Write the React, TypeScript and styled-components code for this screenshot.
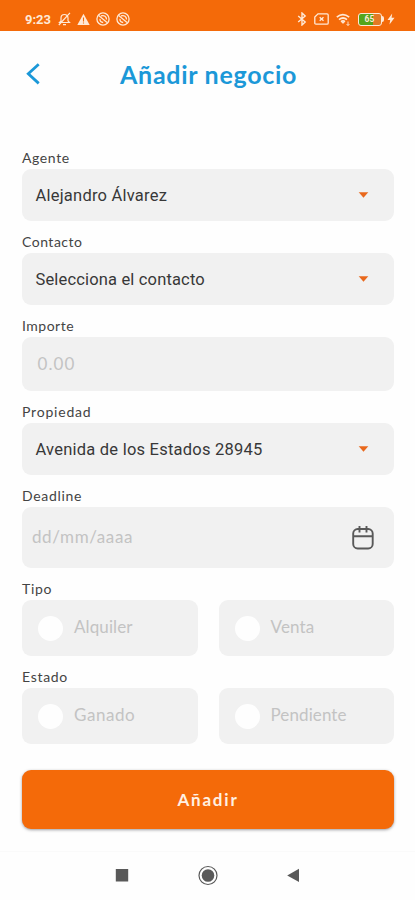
import React from "react";
import styled, { createGlobalStyle } from "styled-components";

const ORANGE = "#f46a09";
const BLUE = "#1b98d8";
const FIELD = "#f1f1f1";
const CREAM = "#ffe9d6";
const GRAPHITE = "#595959";

const GlobalStyle = createGlobalStyle`
  * { box-sizing: border-box; }
  body { margin: 0; background: #fefefe; }
  button { font: inherit; border: 0; padding: 0; background: none; }
  svg { display: block; }
`;

const Screen = styled.div`
  width: 415px;
  height: 900px;
  display: flex;
  flex-direction: column;
  overflow: hidden;
  background: #fefefe;
  font-family: Lato, sans-serif;
`;

const StatusBar = styled.div`
  height: 30.5px;
  flex: none;
  display: flex;
  align-items: center;
  justify-content: space-between;
  padding: 8px 20px 0 25px;
  background: ${ORANGE};
  color: ${CREAM};
`;

const StatusGroup = styled.div<{ $gap: number }>`
  display: flex;
  align-items: center;
  gap: ${(p) => p.$gap}px;
`;

const Clock = styled.span`
  font: 700 13px/15px Roboto, sans-serif;
  width: 27px;
  white-space: nowrap;
`;

const Header = styled.header`
  height: 106.5px;
  flex: none;
  display: grid;
  grid-template-columns: 120px 1fr;
  align-items: start;
`;

const BackButton = styled.button`
  margin: 31px 0 0 25px;
  width: 16px;
  height: 24px;
`;

const Title = styled.h1`
  margin: 26px 0 0;
  color: ${BLUE};
  font-size: 25px;
  line-height: 34px;
  font-weight: 700;
  letter-spacing: 0.72px;
  white-space: nowrap;
`;

const Form = styled.main`
  padding: 0 21px 0 22px;
  display: flex;
  flex-direction: column;
`;

const Label = styled.div<{ $space: number; $height?: number }>`
  height: ${(p) => p.$height ?? 32}px;
  padding-top: 12px;
  font-size: 14px;
  line-height: 18px;
  color: #444;
  letter-spacing: ${(p) => p.$space}px;
`;

const Field = styled.div<{ $height: number; $left?: number; $right?: number }>`
  height: ${(p) => p.$height}px;
  border-radius: 9px;
  background: ${FIELD};
  display: flex;
  align-items: center;
  justify-content: space-between;
  padding: 0 ${(p) => p.$right ?? 25}px 0 ${(p) => p.$left ?? 13.5}px;
`;

const Value = styled.span<{ $space: number }>`
  padding-top: 2px;
  font: 400 16.5px/22px Roboto, sans-serif;
  color: #383838;
  letter-spacing: ${(p) => p.$space}px;
`;

const Placeholder = styled.span<{ $space: number }>`
  font-size: 17px;
  line-height: 22px;
  color: #c3c3c3;
  letter-spacing: ${(p) => p.$space}px;
`;

const Options = styled.div`
  display: grid;
  grid-template-columns: 1fr 1fr;
  gap: 21px;
`;

const Option = styled.div`
  height: 56px;
  border-radius: 9px;
  background: ${FIELD};
  display: flex;
  align-items: center;
  padding-left: 16px;
  gap: 11px;
`;

const Radio = styled.span`
  width: 25px;
  height: 25px;
  border-radius: 50%;
  background: #fefefe;
`;

const OptionText = styled(Placeholder)`
  margin-top: -3px;
`;

const Submit = styled.button`
  && {
    margin-top: 26px;
    height: 59px;
    border-radius: 9px;
    background: ${ORANGE};
    color: #fff0e2;
    font-size: 17px;
    font-weight: 700;
    letter-spacing: 1.8px;
    box-shadow: 0 1px 3px rgba(60, 60, 70, 0.5);
  }
`;

const Navigation = styled.nav`
  margin-top: auto;
  height: 49px;
  flex: none;
  border-top: 1px solid #fafafa;
  display: flex;
  justify-content: center;
  align-items: center;
  gap: 61.5px;
`;

const MutedBell = () => (
  <svg width="13" height="14" viewBox="0 0 13 14" fill="none" stroke="currentColor" strokeWidth="1.2">
    <path d="M1.500 10.500h10L10 8.800V6a3.500 3.500 0 0 0-7 0v2.800zM5 12.600h3M12 .8.8 13" />
  </svg>
);

const Warning = () => (
  <svg width="13" height="13" viewBox="0 0 13 13">
    <path d="M6.500.8 12.700 12H.3z" fill="currentColor" />
    <path d="M6.500 4.500v4M6.500 9.400v1.200" stroke={ORANGE} strokeWidth="1.1" />
  </svg>
);

const Blocked = () => (
  <svg width="14" height="14" viewBox="0 0 14 14" fill="none" stroke="currentColor" strokeWidth="1.3">
    <circle cx="7" cy="7" r="6.100" />
    <path d="m2.700 3.500 8.300 7M5 3.900c3.300-1 5.600.8 5.500 3.700M4 6.800c-.3 2.400 1.200 3.600 3.200 3.700" />
  </svg>
);

const Bluetooth = () => (
  <svg width="10" height="14" viewBox="0 0 10 14" fill="none" stroke="currentColor" strokeWidth="1.4">
    <path d="m1.200 4 7 6L5 13V1l3.200 3-7 6" />
  </svg>
);

const SimCard = () => (
  <svg width="15" height="12" viewBox="0 0 15 12" fill="none" stroke="currentColor" strokeWidth="1.3">
    <path d="M4 .8h9q1.200 0 1.200 1.200v8q0 1.200-1.200 1.200H2Q.8 11.200.8 10V4zM5.700 4.200l3.800 3.600M9.500 4.200 5.700 7.800" />
  </svg>
);

const Wifi = () => (
  <svg width="15" height="13" viewBox="0 0 15 13" fill="none" stroke="currentColor" strokeWidth="1.700">
    <path d="M.8 4.200q6-5 12.400 0M3 6.600q4-3.200 8 0M5 8.700q2-1.500 4 0" />
    <path d="m5.500 9 1.500 2 1.500-2z" fill="currentColor" stroke="none" />
    <path d="M12 8.500v4M10.500 11l1.500 1.500 1.500-1.500" strokeWidth=".9" />
  </svg>
);

const BatteryBox = styled.span`
  display: flex;
  align-items: center;
`;

const BatteryBody = styled.span`
  width: 24px;
  height: 12.5px;
  border: 1.5px solid ${CREAM};
  border-radius: 3px;
  background: linear-gradient(90deg, #55a51c 0 65%, #e37a25 65%);
  font: 700 8.5px/10px Roboto, sans-serif;
  text-align: center;
  color: ${CREAM};
`;

const BatteryTip = styled.span`
  width: 2.5px;
  height: 6px;
  border-radius: 0 2px 2px 0;
  background: ${CREAM};
`;

const Bolt = () => (
  <svg width="8" height="12" viewBox="0 0 8 12">
    <path d="M5.200.5.500 7h2.700L2.500 11.500 7.500 4.800H4.600z" fill="currentColor" />
  </svg>
);

const Caret = () => (
  <svg width="11" height="6" viewBox="0 0 11 6">
    <path d="M.7.300h9.600L5.500 5.700z" fill="#e9681c" />
  </svg>
);

const Calendar = () => (
  <svg width="22" height="25" viewBox="0 0 22 25" fill="none" stroke={GRAPHITE} strokeWidth="1.900">
    <rect x="1.200" y="4" width="19.500" height="19.500" rx="4.500" />
    <path d="M1 11.200h20M7.500 1v6.500M14.500 1v6.500" />
  </svg>
);

const SelectField = ({ text, space }: { text: string; space: number }) => (
  <Field $height={52}>
    <Value $space={space}>{text}</Value>
    <Caret />
  </Field>
);

const Choice = ({ text, space }: { text: string; space: number }) => (
  <Option>
    <Radio />
    <OptionText $space={space}>{text}</OptionText>
  </Option>
);

export default function App() {
  return (
    <Screen>
      <GlobalStyle />
      <StatusBar>
        <StatusGroup $gap={6}>
          <Clock>9:23</Clock>
          <MutedBell />
          <Warning />
          <Blocked />
          <Blocked />
        </StatusGroup>
        <StatusGroup $gap={7}>
          <Bluetooth />
          <SimCard />
          <Wifi />
          <StatusGroup $gap={3}>
            <BatteryBox>
              <BatteryBody>65</BatteryBody>
              <BatteryTip />
            </BatteryBox>
            <Bolt />
          </StatusGroup>
        </StatusGroup>
      </StatusBar>
      <Header>
        <BackButton aria-label="Volver">
          <svg width="16" height="24" viewBox="0 0 16 24" fill="none" stroke={BLUE} strokeWidth="2.800">
            <path d="M13.700 2.300 3.300 11.800l10.400 9.600" />
          </svg>
        </BackButton>
        <Title>Añadir negocio</Title>
      </Header>
      <Form>
        <Label $space={0.6}>Agente</Label>
        <SelectField text="Alejandro Álvarez" space={0.22} />
        <Label $space={0.5}>Contacto</Label>
        <SelectField text="Selecciona el contacto" space={0.16} />
        <Label $space={0.5} $height={31.5}>Importe</Label>
        <Field $height={54} $left={15.5}>
          <Placeholder $space={1.1}>0.00</Placeholder>
        </Field>
        <Label $space={0.8}>Propiedad</Label>
        <SelectField text="Avenida de los Estados 28945" space={0.23} />
        <Label $space={0.7}>Deadline</Label>
        <Field $height={61.5} $left={10} $right={20}>
          <Placeholder $space={0.6}>dd/mm/aaaa</Placeholder>
          <Calendar />
        </Field>
        <Label $space={0.7}>Tipo</Label>
        <Options>
          <Choice text="Alquiler" space={0.1} />
          <Choice text="Venta" space={0.15} />
        </Options>
        <Label $space={0.7}>Estado</Label>
        <Options>
          <Choice text="Ganado" space={0.55} />
          <Choice text="Pendiente" space={0.1} />
        </Options>
        <Submit>Añadir</Submit>
      </Form>
      <Navigation>
        <svg width="24" height="24" viewBox="0 0 24 24">
          <rect x="5.800" y="5" width="12.400" height="12.500" fill={GRAPHITE} />
        </svg>
        <svg width="24" height="24" viewBox="0 0 24 24">
          <circle cx="12" cy="11.500" r="9" fill="none" stroke={GRAPHITE} strokeWidth="1.200" />
          <circle cx="12" cy="11.500" r="6.300" fill={GRAPHITE} />
        </svg>
        <svg width="24" height="24" viewBox="0 0 24 24">
          <path d="M18 4.700v13.400L6.200 11.400z" fill={GRAPHITE} />
        </svg>
      </Navigation>
    </Screen>
  );
}
